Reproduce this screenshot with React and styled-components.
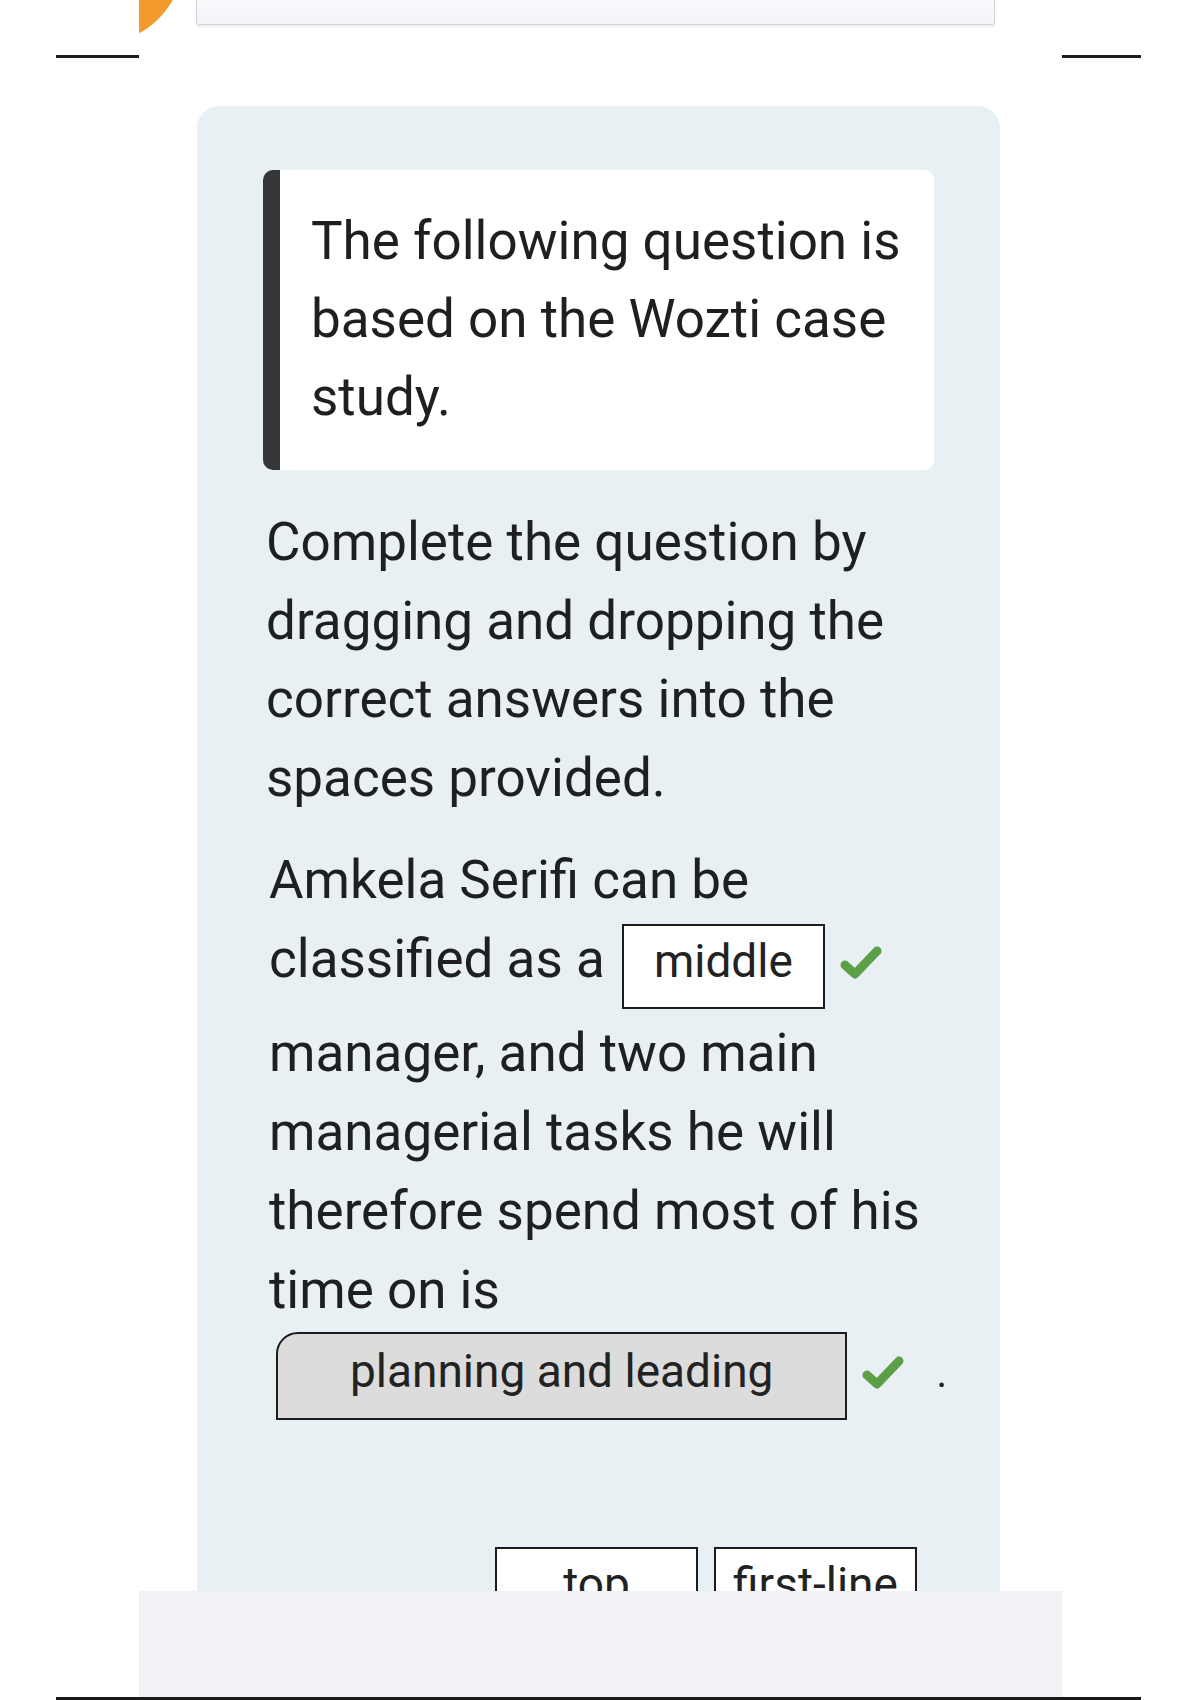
import React from 'react';
import styled, { createGlobalStyle } from 'styled-components';

const Global = createGlobalStyle`
  html, body {
    margin: 0;
    padding: 0;
    background: #fff;
  }
  body {
    font-family: Roboto, "Noto Sans", sans-serif;
    color: #1d1f20;
  }
`;

export default function App() {
  return (
    <>
      <Global />
      <Page>
        <Side>
          <Rule />
        </Side>
        <Screen>
          <TopStrip>
            <Blob width="57" height="40" viewBox="0 0 57 40">
              <circle cx="-39" cy="-40" r="83" fill="#f39a2c" />
            </Blob>
            <PrevField />
          </TopStrip>
          <Card>
            <Quote>
              <QuoteText>The following question is based on the Wozti case study.</QuoteText>
            </Quote>
            <Para>Complete the question by dragging and dropping the correct answers into the spaces provided.</Para>
            <Question>
              Amkela Serifi can be classified as a <Drop>middle</Drop>
              <Check />
              {' '}manager, and two main managerial tasks he will therefore spend most of his time on is{' '}
              <NoWrap>
                <Drop $filled>planning and leading</Drop>
                <Check />
                <Period>.</Period>
              </NoWrap>
            </Question>
            <Pool>
              <Option>top</Option>
              <Option>first-line</Option>
            </Pool>
          </Card>
          <Footer />
        </Screen>
        <Side>
          <Rule />
        </Side>
        <BottomRule />
      </Page>
    </>
  );
}

function Check() {
  return (
    <Tick width="46" height="40" viewBox="0 0 46 40">
      <path d="M7 22 L17 31 L39 8" fill="none" stroke="#5c9f47" strokeWidth="9" strokeLinecap="round" strokeLinejoin="round" />
    </Tick>
  );
}

const Page = styled.div`
  width: 1200px;
  height: 1700px;
  display: grid;
  grid-template-columns: 56px 83px 923px 79px 1fr;
  grid-template-rows: 1697px 3px;
  overflow: hidden;
`;

const Side = styled.div`
  padding-top: 55px;
  &:first-child {
    grid-column: 2;
  }
  &:nth-child(3) {
    grid-column: 4;
  }
`;

const Rule = styled.div`
  height: 3px;
  background: #1e1e1e;
`;

const BottomRule = styled.div`
  grid-column: 2 / 5;
  grid-row: 2;
  background: #1a1a1a;
`;

const Screen = styled.div`
  grid-column: 3;
  display: flex;
  flex-direction: column;
  overflow: hidden;
`;

const TopStrip = styled.div`
  height: 106px;
  display: flex;
  align-items: flex-start;
  flex-shrink: 0;
`;

const Blob = styled.svg`
  display: block;
  flex-shrink: 0;
`;

const PrevField = styled.div`
  width: 797px;
  height: 24px;
  background: linear-gradient(#f9fafc, #f3f4f7);
  border: 1.5px solid #d3d4d8;
  border-top: none;
  border-radius: 0 0 3px 3px;
  box-shadow: 0 2px 2px rgba(0, 0, 0, 0.08);
`;

const Card = styled.div`
  margin-left: 58px;
  width: 803px;
  flex: 1;
  background: #e8f0f4;
  border-radius: 22px 22px 0 0;
  padding: 64px 66px 0;
  box-sizing: border-box;
  overflow: hidden;
`;

const Quote = styled.div`
  background: #fff;
  border-left: 17px solid #343638;
  border-radius: 10px;
  padding: 32px 16px 34px 31px;
`;

const QuoteText = styled.p`
  margin: 0;
  font-size: 53px;
  line-height: 78px;
`;

const Para = styled.p`
  margin: 33px 0 0 3px;
  font-size: 53px;
  line-height: 78.5px;
  width: 650px;
`;

const Question = styled.p`
  margin: 24px 0 0 6px;
  font-size: 53px;
  line-height: 79px;
  width: 662px;
`;

const Drop = styled.span`
  display: inline-block;
  vertical-align: baseline;
  box-sizing: border-box;
  line-height: ${p => (p.$filled ? '75px' : '71px')};
  padding: 0 ${p => (p.$filled ? '72px' : '30px')} ${p => (p.$filled ? '9px' : '10px')};
  margin: ${p => (p.$filled ? '0 0 0 7px' : '0 0 5px 4px')};
  font-size: 46px;
  color: #222;
  background: ${p => (p.$filled ? '#dcdcdc' : '#fff')};
  border: 2px solid #1c1c1c;
  border-radius: ${p => (p.$filled ? '22px 0 0 0' : '0')};
`;

const Tick = styled.svg`
  display: inline-block;
  vertical-align: middle;
  margin-left: 13px;
`;

const NoWrap = styled.span`
  white-space: nowrap;
`;

const Period = styled.span`
  display: inline-block;
  vertical-align: middle;
  margin-left: 30px;
  font-size: 40px;
`;

const Pool = styled.div`
  margin-top: 127px;
  display: flex;
  justify-content: flex-end;
  gap: 16px;
  padding-right: 17px;
`;

const Option = styled.div`
  width: 203px;
  height: 82px;
  box-sizing: border-box;
  border: 2px solid #1c1c1c;
  border-bottom: none;
  background: #fff;
  font-size: 46px;
  line-height: 70px;
  text-align: center;
  color: #222;
`;

const Footer = styled.div`
  height: 106px;
  flex-shrink: 0;
  background: #f1f2f6;
`;
